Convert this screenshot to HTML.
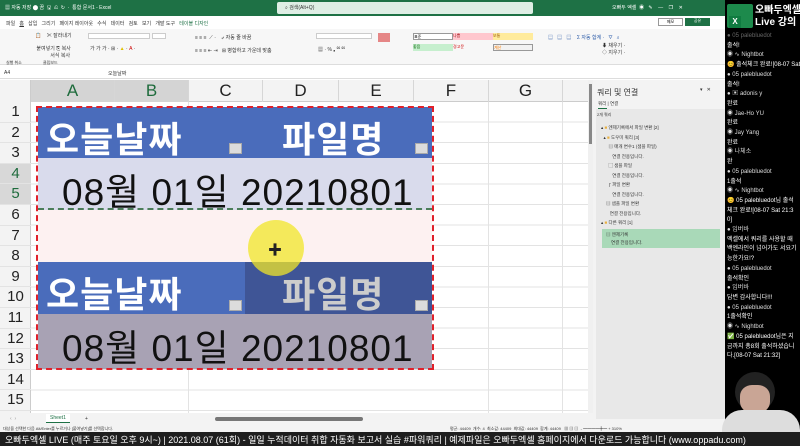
<!DOCTYPE html>
<html><head><meta charset="utf-8"><style>
*{margin:0;padding:0;box-sizing:border-box}
body{width:800px;height:446px;overflow:hidden;background:#000;font-family:"Liberation Sans","Noto Sans CJK KR",sans-serif;position:relative}
.a{position:absolute}
.t{font-size:5px;color:#333;white-space:nowrap}
.rn{position:absolute;left:0;width:31px;text-align:center;font-size:15px;color:#222;height:20.6px;line-height:20.6px;border-bottom:1px solid #e3e3e3}
.cl{position:absolute;top:80px;height:22px;text-align:center;font-size:17px;line-height:22px;color:#222;border-right:1px solid #d6d6d6}
.big{position:absolute;font-size:36px;font-weight:bold;color:#fff;letter-spacing:1px}
.num{position:absolute;font-size:37px;color:#111;letter-spacing:1px}
.dd{position:absolute;width:13px;height:11px;background:#dcdcdc;border:1px solid #aaa}
.chat{position:absolute;left:727px;font-size:6px;color:#fff;line-height:9.7px;white-space:nowrap;overflow:hidden;width:73px}
.chat b{font-weight:normal;color:#ddd}
</style></head><body>
<div class="a" style="left:0;top:0;width:725px;height:432px;background:#fff"></div>
<div class="a" style="left:0;top:0;width:725px;height:16px;background:#1e7145"></div>
<div class="a t" style="left:5px;top:4px;color:#fff">▦ 자동 저장 ⬤ 끔 &nbsp;🖫 &nbsp;⎌ &nbsp;↻ &nbsp;· &nbsp;통합 문서1 - Excel</div>
<div class="a" style="left:277px;top:2px;width:256px;height:12px;background:#dfeee5;border-radius:2px"></div>
<div class="a t" style="left:285px;top:4px;color:#333">⌕ 검색(Alt+Q)</div>
<div class="a t" style="left:612px;top:4px;color:#fff">오빠두 엑셀 &nbsp;◉ &nbsp;&nbsp;✎ &nbsp;&nbsp;&nbsp;— &nbsp;&nbsp;&nbsp;❐ &nbsp;&nbsp;&nbsp;✕</div>
<div class="a" style="left:0;top:16px;width:725px;height:13px;background:#fff"></div>
<div class="a t" style="left:6px;top:20px">파일 &nbsp;&nbsp;<u>홈</u> &nbsp;&nbsp;삽입 &nbsp;&nbsp;그리기 &nbsp;&nbsp;페이지 레이아웃 &nbsp;&nbsp;수식 &nbsp;&nbsp;데이터 &nbsp;&nbsp;검토 &nbsp;&nbsp;보기 &nbsp;&nbsp;개발 도구 &nbsp;&nbsp;<span style="color:#1e7145">테이블 디자인</span></div>
<div class="a" style="left:658px;top:18px;width:25px;height:8px;border:1px solid #999;font-size:4px;text-align:center">메모</div>
<div class="a" style="left:685px;top:18px;width:25px;height:8px;background:#1e7145;font-size:4px;color:#fff;text-align:center">공유</div>
<div class="a" style="left:0;top:29px;width:725px;height:36px;background:#f7f7f7;border-bottom:1px solid #ddd"></div>
<div class="a t" style="left:6px;top:60px;font-size:4px">실행 취소 &nbsp;&nbsp;&nbsp;&nbsp;&nbsp;&nbsp;&nbsp;&nbsp;&nbsp;&nbsp;&nbsp;&nbsp;&nbsp;&nbsp;&nbsp;&nbsp;&nbsp;&nbsp;클립보드</div>
<div class="a t" style="left:35px;top:32px">📋 &nbsp;&nbsp;&nbsp;✂ 잘라내기<br><br>&nbsp;붙여넣기 ⎘ 복사<br>&nbsp;&nbsp;&nbsp;&nbsp;&nbsp;&nbsp;&nbsp;&nbsp;&nbsp;&nbsp;&nbsp;서식 복사</div>
<div class="a" style="left:88px;top:33px;width:62px;height:6px;background:#fff;border:1px solid #ccc"></div>
<div class="a" style="left:152px;top:33px;width:14px;height:6px;background:#fff;border:1px solid #ccc"></div>
<div class="a t" style="left:90px;top:45px">가 가 가 · ⊞ · <span style="color:#e0c000">▲</span> · <span style="color:#c00">A</span> · </div>
<div class="a t" style="left:195px;top:34px">≡ ≡ ≡ &nbsp;⟋ · &nbsp;&nbsp;&nbsp;⤶ 자동 줄 바꿈<br><br>≡ ≡ ≡ ⇤ ⇥ &nbsp;&nbsp;⊞ 병합하고 가운데 맞춤</div>
<div class="a" style="left:316px;top:33px;width:56px;height:6px;background:#fff;border:1px solid #ccc"></div>
<div class="a t" style="left:318px;top:46px">▦ · % ❟ ⁰⁰ ⁰⁰</div>
<div class="a" style="left:378px;top:33px;width:12px;height:9px;background:#d55;opacity:.7"></div>
<div class="a" style="left:413px;top:33px;width:40px;height:7px;background:#fff;border:1px solid #999;font-size:4px">표준</div>
<div class="a" style="left:453px;top:33px;width:40px;height:7px;background:#ffc7ce;font-size:4px;color:#9c0006">나쁨</div>
<div class="a" style="left:493px;top:33px;width:40px;height:7px;background:#ffeb9c;font-size:4px;color:#9c5700">보통</div>
<div class="a" style="left:413px;top:44px;width:40px;height:7px;background:#c6efce;font-size:4px;color:#006100">좋음</div>
<div class="a" style="left:453px;top:44px;width:40px;height:7px;font-size:4px;color:#c00">경고문</div>
<div class="a" style="left:493px;top:44px;width:40px;height:7px;background:#f2f2f2;border:1px solid #999;font-size:4px;color:#fa7d00">계산</div>
<div class="a t" style="left:548px;top:34px;color:#2a5aa8">▤ &nbsp;&nbsp;▤ &nbsp;&nbsp;▤ &nbsp;&nbsp;&nbsp;Σ 자동 합계 · &nbsp;&nbsp;⛛ &nbsp;&nbsp;⌕</div>
<div class="a t" style="left:602px;top:42px">⬇ 채우기 ·<br>◇ 지우기 ·</div>
<div class="a" style="left:0;top:66px;width:725px;height:13px;background:#fff;border-bottom:1px solid #ddd"></div>
<div class="a t" style="left:4px;top:70px">A4</div>
<div class="a t" style="left:108px;top:70px">오늘날짜</div>
<div class="a" style="left:0;top:80px;width:590px;height:22px;background:#f3f3f3;border-bottom:1px solid #ccc"></div>
<div class="a" style="left:0;top:80px;width:31px;height:333px;background:#f3f3f3;border-right:1px solid #ccc"></div>
<div class="a" style="left:31px;top:80px;width:158px;height:22px;background:#d4d4d4"></div>
<div class="cl" style="left:31px;width:84px;color:#1e6b3c">A</div>
<div class="cl" style="left:115px;width:74px;color:#1e6b3c">B</div>
<div class="cl" style="left:189px;width:74px">C</div>
<div class="cl" style="left:263px;width:76px">D</div>
<div class="cl" style="left:339px;width:75px">E</div>
<div class="cl" style="left:414px;width:75px">F</div>
<div class="cl" style="left:489px;width:74px">G</div>
<div class="a" style="left:31px;top:102px;width:557px;height:311px;background:repeating-linear-gradient(#fff 0,#fff 19.6px,#e3e3e3 19.6px,#e3e3e3 20.6px)"></div>
<div class="a" style="left:188px;top:102px;width:1px;height:311px;background:#e3e3e3"></div>
<div class="a" style="left:488px;top:102px;width:1px;height:311px;background:#e3e3e3"></div>
<div class="a" style="left:562px;top:102px;width:1px;height:311px;background:#e3e3e3"></div>
<div class="a" style="left:0;top:164px;width:31px;height:41px;background:#d8d8d8"></div>
<div class="rn" style="top:102px">1</div><div class="rn" style="top:122.6px">2</div><div class="rn" style="top:143.2px">3</div><div class="rn" style="top:163.8px;color:#1e6b3c">4</div><div class="rn" style="top:184.4px;color:#1e6b3c">5</div><div class="rn" style="top:205px">6</div><div class="rn" style="top:225.6px">7</div><div class="rn" style="top:246.2px">8</div><div class="rn" style="top:266.8px">9</div><div class="rn" style="top:287.4px">10</div><div class="rn" style="top:308px">11</div><div class="rn" style="top:328.6px">12</div><div class="rn" style="top:349.2px">13</div><div class="rn" style="top:369.8px">14</div><div class="rn" style="top:390.4px">15</div>
<div class="a" style="left:588px;top:80px;width:5px;height:333px;background:#f0f0f0"></div>
<div class="a" style="left:589px;top:84px;width:3px;height:60px;background:#888"></div>
<div class="a" style="left:38px;top:107px;width:394px;height:51px;background:#4a6cbb"></div>
<div class="a" style="left:38px;top:158px;width:394px;height:52px;background:#d9dbec"></div>
<div class="a" style="left:38px;top:208px;width:394px;height:2px;border-top:2px dashed #4b7d5a"></div>
<div class="a" style="left:38px;top:210px;width:394px;height:52px;background:#fdf1f1"></div>
<div class="a" style="left:38px;top:262px;width:207px;height:52px;background:#4a6cbb"></div>
<div class="a" style="left:245px;top:262px;width:187px;height:52px;background:#3f5596"></div>
<div class="a" style="left:38px;top:314px;width:394px;height:55px;background:#a8a2b4"></div>
<div class="big" style="left:46px;top:111px">오늘날짜</div>
<div class="big" style="left:282px;top:111px">파일명</div>
<div class="num" style="left:62px;top:162px">08월 01일 20210801</div>
<div class="big" style="left:46px;top:266px">오늘날짜</div>
<div class="big" style="left:282px;top:266px;color:#ccc">파일명</div>
<div class="num" style="left:62px;top:318px">08월 01일 20210801</div>
<div class="dd" style="left:229px;top:143px"></div><div class="dd" style="left:415px;top:143px"></div>
<div class="dd" style="left:229px;top:300px"></div><div class="dd" style="left:415px;top:300px"></div>
<div class="a" style="left:36px;top:106px;width:398px;height:264px;border:2px dashed #e0202a"></div>
<div class="a" style="left:248px;top:220px;width:56px;height:56px;border-radius:50%;background:rgba(240,230,40,.75)"></div>
<div class="a" style="left:268px;top:240px;font-size:14px;color:#222">✚</div>
<div class="a" style="left:0;top:413px;width:725px;height:12px;background:#f3f3f3"></div>
<div class="a t" style="left:10px;top:416px;color:#999">‹ &nbsp;›</div>
<div class="a t" style="left:46px;top:414px;color:#1e7145;border-bottom:1px solid #1e7145;background:#fff;padding:1px 4px">Sheet1</div>
<div class="a t" style="left:85px;top:416px">+</div>
<div class="a" style="left:215px;top:417px;width:148px;height:4px;background:#777;border-radius:2px"></div>
<div class="a" style="left:0;top:425px;width:725px;height:7px;background:#f3f3f3"></div>
<div class="a t" style="left:3px;top:426px;font-size:4px">대상을 선택한 다음 Alt/Enter를 누르거나 [붙여넣기]를 선택합니다.</div>
<div class="a t" style="left:450px;top:426px;font-size:4px">평균: 44409 &nbsp;개수: 4 &nbsp;최소값: 44409 &nbsp;최대값: 44409 &nbsp;합계: 44409 &nbsp;&nbsp;▦ ▥ ▤ &nbsp;- ━━━━╋━ + 310%</div>
<div class="a" style="left:593px;top:80px;width:132px;height:345px;background:#f3f3f3"></div>
<div class="a" style="left:597px;top:87px;font-size:8px;color:#333">쿼리 및 연결</div>
<div class="a t" style="left:700px;top:87px">▾ &nbsp;&nbsp;✕</div>
<div class="a t" style="left:598px;top:101px;font-size:4.5px">쿼리 | 연결</div>
<div class="a" style="left:598px;top:108px;width:9px;height:1px;background:#1e7145"></div>
<div class="a" style="left:596px;top:109px;width:129px;height:310px;background:#e8e8e8"></div>
<div class="a t" style="left:597px;top:112px;font-size:4px">2개 쿼리</div>
<div class="a t" style="left:601px;top:123px;font-size:4.5px;line-height:9.5px">▴ <span style="color:#e8b040">■</span> 엔제기록에서 파일 변환 [2]<br>&nbsp;&nbsp;▴ <span style="color:#e8b040">■</span> 도우미 쿼리 [3]<br>&nbsp;&nbsp;&nbsp;&nbsp;&nbsp;&nbsp;▤ 매개 변수1 (샘플 파일)<br>&nbsp;&nbsp;&nbsp;&nbsp;&nbsp;&nbsp;&nbsp;&nbsp;&nbsp;연결 전용입니다.<br>&nbsp;&nbsp;&nbsp;&nbsp;&nbsp;&nbsp;▢ 샘플 파일<br>&nbsp;&nbsp;&nbsp;&nbsp;&nbsp;&nbsp;&nbsp;&nbsp;&nbsp;연결 전용입니다.<br>&nbsp;&nbsp;&nbsp;&nbsp;&nbsp;&nbsp;ƒ 파일 변환<br>&nbsp;&nbsp;&nbsp;&nbsp;&nbsp;&nbsp;&nbsp;&nbsp;&nbsp;연결 전용입니다.<br>&nbsp;&nbsp;&nbsp;&nbsp;▤ 샘플 파일 변환<br>&nbsp;&nbsp;&nbsp;&nbsp;&nbsp;&nbsp;&nbsp;연결 전용입니다.<br>▴ <span style="color:#e8b040">■</span> 다른 쿼리 [1]</div>
<div class="a" style="left:602px;top:229px;width:118px;height:19px;background:#a9d9b8"></div>
<div class="a t" style="left:606px;top:231px;font-size:4.5px;line-height:8px">▤ 엔제기록<br>&nbsp;&nbsp;&nbsp;&nbsp;연결 전용입니다.</div>
<div class="a" style="left:727px;top:4px;width:26px;height:24px;background:#1d8a4c;border-radius:2px"></div>
<div class="a" style="left:729px;top:16px;width:12px;height:12px;background:#107c41;color:#fff;font-size:8px;font-weight:bold;text-align:center;line-height:12px">X</div>
<div class="a" style="left:755px;top:5px;font-size:10px;font-weight:bold;color:#fff;line-height:12px;white-space:nowrap">오빠두엑셀<br>Live 강의</div>
<div class="chat" style="top:32px"><b style="color:#666">● 05 palebluedot</b><br>출석!<br><b>◉ ∿ Nightbot</b><br>😊 출석체크 완료![08-07 Sat 21:28]<br><b>● 05 palebluedot</b><br>출석!<br><b>● ▣ adonis y</b><br>완료<br><b>◉ Jae-Ho YU</b><br>완료<br><b>◉ Jay Yang</b><br>완료<br><b>◉ 나체소</b><br>완<br><b>● 05 palebluedot</b><br>1출석<br><b>◉ ∿ Nightbot</b><br>😊 05 palebluedot님 출석<br>체크 완료![08-07 Sat 21:3<br>0]<br><b>● 임버바</b><br>엑셀에서 쿼리를 사용할 때<br>백엔라인이 넘어가도 서요기<br>능한가요!?<br><b>● 05 palebluedot</b><br>출석확인<br><b>● 임버바</b><br>답변 감사합니다!!!<br><b>● 05 palebluedot</b><br>1출석확인<br><b>◉ ∿ Nightbot</b><br>✅ 05 palebluedot님은 지<br>금까지 총8회 출석하셨습니<br>다.[08-07 Sat 21:32]</div>
<div class="a" style="left:735px;top:372px;width:40px;height:40px;border-radius:50%;background:#222"></div>
<div class="a" style="left:740px;top:385px;width:30px;height:28px;border-radius:40%;background:#c9a595"></div>
<div class="a" style="left:722px;top:410px;width:78px;height:30px;border-radius:20px 20px 0 0;background:#ddd"></div>
<div class="a" style="left:0;top:432px;width:800px;height:14px;background:#1e1e1e"></div>
<div class="a" style="left:5px;top:433px;font-size:9px;color:#fff;white-space:nowrap">오빠두엑셀 LIVE (매주 토요일 오후 9시~) | 2021.08.07 (61회) - 일일 누적데이터 취합 자동화 보고서 실습 #파워쿼리 | 예제파일은 오빠두엑셀 홈페이지에서 다운로드 가능합니다 (www.oppadu.com)</div>
</body></html>
